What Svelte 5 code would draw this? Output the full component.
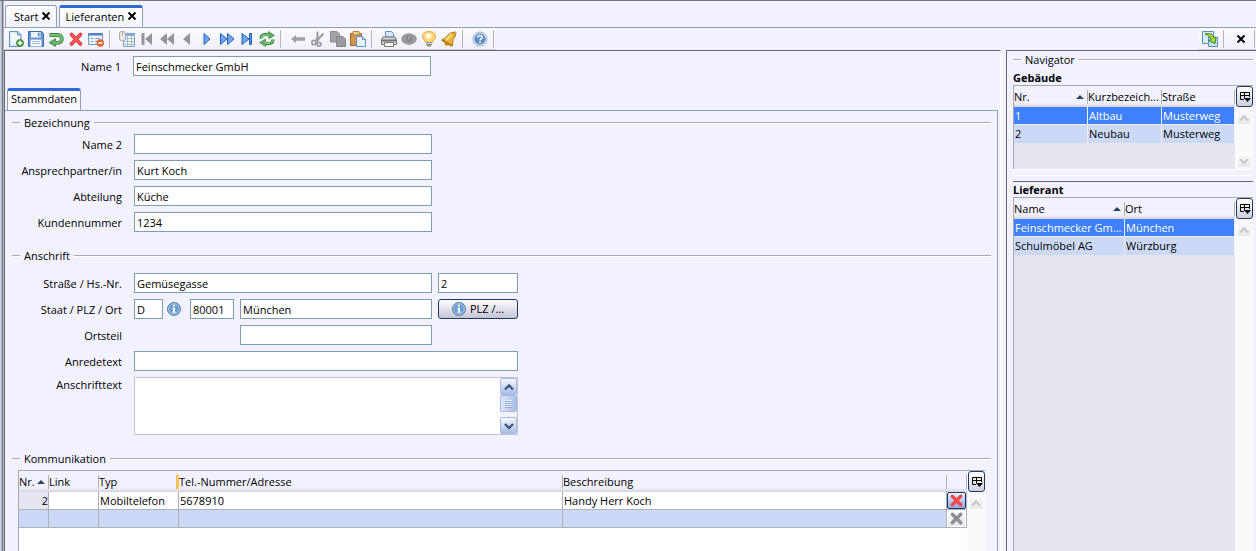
<script lang="ts">
  let tabs = [
    { title: 'Start', active: false },
    { title: 'Lieferanten', active: true },
  ];

  let toolGroups = [
    [['new', 'Neu'], ['save', 'Speichern'], ['undo', 'Rückgängig'], ['delete', 'Löschen'], ['form', 'Maske leeren']],
    [['list', 'Liste'], ['first', 'Erster'], ['rewind', 'Zurückblättern'], ['prev', 'Voriger'], ['next', 'Nächster'], ['forward', 'Vorblättern'], ['last', 'Letzter'], ['refresh', 'Aktualisieren']],
    [['back', 'Zurück'], ['cut', 'Ausschneiden'], ['copy', 'Kopieren'], ['paste', 'Einfügen']],
    [['print', 'Drucken'], ['eye', 'Vorschau'], ['bulb', 'Hinweis'], ['bell', 'Erinnerung']],
    [['help', 'Hilfe']],
  ];

  let supplier = {
    name1: 'Feinschmecker GmbH',
    name2: '',
    contact: 'Kurt Koch',
    department: 'Küche',
    customerNo: '1234',
    street: 'Gemüsegasse',
    houseNo: '2',
    country: 'D',
    zip: '80001',
    city: 'München',
    district: '',
    salutation: '',
    addressText: '',
  };

  let buildings = [
    { nr: '1', short: 'Altbau', street: 'Musterweg' },
    { nr: '2', short: 'Neubau', street: 'Musterweg' },
  ];
  let suppliers = [
    { name: 'Feinschmecker Gm...', city: 'München' },
    { name: 'Schulmöbel AG', city: 'Würzburg' },
  ];
</script>

{#snippet info()}
  <svg class="info" viewBox="0 0 14 14" aria-hidden="true">
    <circle cx="7" cy="7" r="6.5" fill="#5a8fc4" stroke="#5b7fa6" />
    <circle cx="7" cy="7" r="5.4" fill="#6a9ed0" stroke="#c3daee" stroke-width=".8" />
    <path d="M6.1 2.8h1.9v1.7H6.1zM5.2 5.7H8v4h.9v1.1H5.1V9.7H6V6.8h-.8z" fill="#fff" />
  </svg>
{/snippet}

{#snippet cross()}
  <svg class="cross" viewBox="0 0 10 10" aria-hidden="true">
    <path d="M1.500 1.500l7 7M8.500 1.500l-7 7" stroke="#000" stroke-width="1.900" fill="none" />
  </svg>
{/snippet}

{#snippet columnIcon()}
  <svg viewBox="0 0 13 13" aria-hidden="true">
    <path d="M6 9.500H2.500v-7h9V7M2.500 5.500h9M6.500 2.500v6" stroke="#000" fill="none" />
    <path d="M6 8h7l-3.500 4z" fill="#000" />
  </svg>
{/snippet}

{#snippet bigCross(color: string)}
  <svg viewBox="0 0 16 16" aria-hidden="true">
    <path d="M3.500 3.500l9 9M12.500 3.500l-9 9" stroke={color} stroke-width="3.600" stroke-linecap="round" fill="none" />
  </svg>
{/snippet}

{#snippet chevron(dir: string, color: string)}
  <svg viewBox="0 0 12 12" aria-hidden="true">
    <path d={dir === 'up' ? 'M2 8.500L6 4.500l4 4' : 'M2 4l4 4 4-4'} stroke={color} stroke-width="2.400" fill="none" />
  </svg>
{/snippet}

{#snippet sortMark()}
  <svg class="sort" viewBox="0 0 8 4" aria-hidden="true"><path d="M0 4l4-4 4 4z" fill="#2b4260" /></svg>
{/snippet}

{#snippet tool(name: string)}
  <svg viewBox="0 0 16 16" aria-hidden="true">
    {#if name === 'new'}
      <path d="M1.500.5h8.500l3 3v12H1.500z" fill="#d9ebfb" stroke="#5f93c6" />
      <path d="M3 2h6v2.500h2.500V9L3 14z" fill="#f5faff" />
      <path d="M9.500.8v3.200h3.300" fill="#a9cdf0" stroke="#5f93c6" />
      <circle cx="12" cy="12" r="3.600" fill="#58a146" stroke="#397a2c" stroke-width=".7" />
      <path d="M12 9.800v4.400M9.800 12h4.400" stroke="#fff" stroke-width="1.300" />
    {:else if name === 'save'}
      <path d="M.5.500h13l2 2v13H.5z" fill="#6696d2" stroke="#3c6cae" />
      <path d="M3 1h9.500v5.500H3z" fill="#e8f1fb" />
      <path d="M10 1.800h1.500v3.500H10z" fill="#4e7cb8" />
      <path d="M2.500 8.500h11v7h-11z" fill="#fff" stroke="#9dbce2" />
      <path d="M4 10.500h8M4 12.500h8" stroke="#9fb9d9" />
    {:else if name === 'undo'}
      <path d="M1.500 4h8.500a3.800 3.800 0 010 7.800H6.500" fill="none" stroke="#3f8b43" stroke-width="3.800" />
      <path d="M7.500 7.500v8L1 11.700z" fill="#5dab59" stroke="#3f8b43" stroke-width=".8" />
      <path d="M2 4h8a3.800 3.800 0 010 7.800H5" fill="none" stroke="#7cc077" stroke-width="2" />
    {:else if name === 'delete'}
      <path d="M3.500 3.500l9 9.500M12.500 3.500l-9 9.500" stroke="#e8343a" stroke-width="3.700" stroke-linecap="round" />
      <path d="M3.500 3.500l9 9.500M12.500 3.500l-9 9.500" stroke="#fa6463" stroke-width="1.400" stroke-linecap="round" />
    {:else if name === 'form'}
      <path d="M.5 2.500h14v11H.5z" fill="#eef4fc" stroke="#7398c8" />
      <path d="M.5 2h14v2.500H.5z" fill="#5286c6" />
      <path d="M2.500 7.500h3M2.500 10.500h3M7 7.500h5M7 10.500h3" stroke="#7aa0d0" />
      <circle cx="12.300" cy="12" r="3.400" fill="#ee6b32" stroke="#c84a18" stroke-width=".6" />
      <path d="M10.300 12h4" stroke="#fff" stroke-width="1.400" />
    {:else if name === 'list'}
      <path d="M4.500 2.500h11v13h-11z" fill="#f5faff" stroke="#7da5d0" />
      <path d="M5 3h10v2H5z" fill="#86add6" />
      <path d="M5 7.500h10M5 10.500h10M5 13.500h10M8.500 5v10" stroke="#a2bedb" />
      <path d="M12.500 5v10" stroke="#96cc7d" />
      <rect x=".5" y=".5" width="6" height="9" rx="2" fill="#e7e7e4" stroke="#a9a9a6" />
      <path d="M3.500 1v3.500" stroke="#a9a9a6" />
    {:else if name === 'first'}
      <path d="M2.500 2h3v12h-3zM13 2v12L6 8z" fill="#94949b" />
    {:else if name === 'rewind'}
      <path d="M8 2v12L1 8zM15 2v12L8 8z" fill="#94949b" />
    {:else if name === 'prev'}
      <path d="M11 2v12L4 8z" fill="#94949b" />
    {:else if name === 'next'}
      <path d="M5 2.500v11L11 8z" fill="#6da5ee" stroke="#2463bd" />
    {:else if name === 'forward'}
      <path d="M1.500 2.500v11L8 8zM8.500 2.500v11L15 8z" fill="#6da5ee" stroke="#2463bd" />
    {:else if name === 'last'}
      <path d="M3 2.500v11L10 8z" fill="#6da5ee" stroke="#2463bd" />
      <path d="M10.500 2.500h2v11h-2z" fill="#5a96e8" stroke="#2463bd" />
    {:else if name === 'refresh'}
      <path d="M2 7.500c0-4 4-5 8.500-3.500M14 8.500c0 4-4 5-8.500 3.500" fill="none" stroke="#3c8b40" stroke-width="3.200" />
      <path d="M9.500.5l6 4-5.500 3.300zM6.500 8.200v7.300L.5 11.500z" fill="#63ad61" stroke="#3c8b40" stroke-width=".7" />
      <path d="M2.200 7c.5-3 4-4 8.300-2.700M13.800 9c-.5 3-4 4-8.300 2.700" fill="none" stroke="#86c785" stroke-width="1.500" />
    {:else if name === 'back'}
      <path d="M1 8l5-4v2.300h9v3.400H6V12z" fill="#a0a0a4" />
    {:else if name === 'cut'}
      <path d="M7.500.5v6L6 10M13.500 2.500L8 8.500l-1 2" stroke="#9b9b9f" stroke-width="2" fill="none" />
      <circle cx="4" cy="11.500" r="2.200" fill="none" stroke="#9b9b9f" stroke-width="1.700" />
      <circle cx="9" cy="13.200" r="1.900" fill="none" stroke="#9b9b9f" stroke-width="1.700" />
    {:else if name === 'copy'}
      <path d="M.5.500H7L9.500 3v8H.5z" fill="#a4a4a7" stroke="#8e8e92" />
      <path d="M6.500 5.500H13L15.500 8v7.500h-9z" fill="#9b9b9f" stroke="#86868a" />
    {:else if name === 'paste'}
      <path d="M.5 2.500h11v12H.5z" fill="#d4914a" stroke="#a0652a" />
      <path d="M3 .5h6v3.500H3z" fill="#eed590" stroke="#ab8540" />
      <path d="M6.500 5.500h6l3 3v7h-9z" fill="#e4f1fe" stroke="#5d92cc" />
      <path d="M12.500 5.500v3h3" fill="#b2d1f2" stroke="#5d92cc" />
    {:else if name === 'print'}
      <path d="M4.500 6V.5h6l2 2V6z" fill="#d4e9ff" stroke="#5c95d5" />
      <path d="M2 6h12l1.500 3v4.500H.5V9z" fill="#d5d5d5" stroke="#6f7275" />
      <path d="M1 9.500h14" stroke="#6f7275" stroke-width="2" />
      <path d="M3.500 11.500h9v4h-9z" fill="#f9f9f9" stroke="#75787b" />
    {:else if name === 'eye'}
      <ellipse cx="8" cy="8" rx="7.800" ry="5.800" fill="#9a9a9e" />
      <circle cx="8" cy="7.500" r="3" fill="#858589" />
      <circle cx="8" cy="7" r="1.300" fill="#a7a7aa" />
    {:else if name === 'bulb'}
      <path d="M8 .5c4 0 6.500 2.200 6.500 5 0 2.700-2.500 3.500-3 6h-7c-.5-2.500-3-3.300-3-6 0-2.800 2.500-5 6.500-5z" fill="#fbd57a" stroke="#e8a33c" />
      <path d="M7 2c2.500 0 4 1.500 3.500 3.500S8 8 6 7.500 3.500 2.500 7 2z" fill="#fff6d4" />
      <path d="M5 11h6v2.500L9.500 15.500h-3L5 13.500z" fill="#8c8c8c" />
      <path d="M5 12.500h6" stroke="#d8d8d8" />
    {:else if name === 'bell'}
      <path d="M13.500 1.500C7 .5 7 7 1 8.500l10.500 6.500C12 11 11.500 8 14.500 5z" fill="#eab23a" stroke="#b67a16" />
      <path d="M11 4c-3 .5-3 3.500-6 5" stroke="#ffe28a" stroke-width="2" fill="none" />
      <path d="M1 9l10 6" stroke="#b3720f" stroke-width="2" />
      <circle cx="5.500" cy="13" r="1.800" fill="#c98719" />
      <path d="M12.500 1.500c1-2 3.500 0 2 2" stroke="#b67a16" fill="none" />
    {:else if name === 'help'}
      <circle cx="8" cy="8" r="7" fill="#d6e4f2" stroke="#9db8d4" />
      <circle cx="8" cy="8" r="5" fill="#5f92c8" stroke="#4f82ba" />
      <path d="M5.900 6.500c0-3 4.400-2.600 4.200-.2C10 7.600 8 7.600 8 9.300M8 10.300V12" stroke="#fff" stroke-width="1.500" fill="none" />
    {:else if name === 'sync'}
      <path d="M.5.500h11v12H.5z" fill="#d9eafa" stroke="#5d8fbd" />
      <path d="M6.500 6.500h9v9h-9z" fill="#c3dff8" stroke="#5d8fbd" />
      <path d="M3 3c5-1 8 0 8.500 3.500L14 6l-1 6.500L6.500 9.500 9 8.500C8.500 6 6.500 4.500 3 3z" fill="#a3dc35" stroke="#3d8429" />
    {/if}
  </svg>
{/snippet}

<div class="window">
  <nav class="tabs">
    {#each tabs as tab}
      <div class="tab" class:active={tab.active}>
        <a href="#{tab.title}">{tab.title}</a>
        <button class="close" aria-label="{tab.title} schließen">{@render cross()}</button>
      </div>
    {/each}
  </nav>

  <div class="toolbar">
    <div class="tools">
      {#each toolGroups as group}
        {#each group as [name, label]}
          <button class="tool" aria-label={label}>{@render tool(name)}</button>
        {/each}
        <span class="sep"></span>
      {/each}
    </div>
    <div class="tools right">
      <button class="tool" aria-label="Navigator aktualisieren">{@render tool('sync')}</button>
      <span class="sep"></span>
      <button class="tool" aria-label="Schließen">{@render cross()}</button>
      <span class="sep"></span>
    </div>
  </div>

  <div class="body">
    <main>
      <div class="row head">
        <label for="name1">Name 1</label>
        <input id="name1" class="wide" bind:value={supplier.name1} />
      </div>

      <div class="subtabs"><a class="subtab" href="#stammdaten">Stammdaten</a></div>

      <div class="panel">
        <fieldset>
          <legend>Bezeichnung</legend>
          <div class="rows">
            <div class="row">
              <label for="name2">Name 2</label>
              <input id="name2" class="wide" bind:value={supplier.name2} />
            </div>
            <div class="row">
              <label for="contact">Ansprechpartner/in</label>
              <input id="contact" class="wide" bind:value={supplier.contact} />
            </div>
            <div class="row">
              <label for="department">Abteilung</label>
              <input id="department" class="wide" bind:value={supplier.department} />
            </div>
            <div class="row">
              <label for="customerNo">Kundennummer</label>
              <input id="customerNo" class="wide" bind:value={supplier.customerNo} />
            </div>
          </div>
        </fieldset>

        <fieldset>
          <legend>Anschrift</legend>
          <div class="rows address">
            <div class="row">
              <label for="street">Straße / Hs.-Nr.</label>
              <input id="street" class="wide" bind:value={supplier.street} />
              <input class="short" aria-label="Hausnummer" bind:value={supplier.houseNo} />
            </div>
            <div class="row">
              <label for="country">Staat / PLZ / Ort</label>
              <div class="place">
                <input id="country" class="country" bind:value={supplier.country} />
                <button class="info-button" aria-label="Staat wählen">{@render info()}</button>
                <input class="zip" aria-label="PLZ" bind:value={supplier.zip} />
                <input class="city" aria-label="Ort" bind:value={supplier.city} />
              </div>
              <button class="short push">{@render info()}<span>PLZ /...</span></button>
            </div>
            <div class="row">
              <label for="district">Ortsteil</label>
              <div class="place end">
                <input id="district" class="city" bind:value={supplier.district} />
              </div>
            </div>
            <div class="row">
              <label for="salutation">Anredetext</label>
              <input id="salutation" class="full" bind:value={supplier.salutation} />
            </div>
            <div class="row top">
              <label for="addressText">Anschrifttext</label>
              <div class="memo full">
                <textarea id="addressText" bind:value={supplier.addressText}></textarea>
                <div class="memo-bar">
                  <button aria-label="Nach oben">{@render chevron('up', '#3d5885')}</button>
                  <span class="thumb"></span>
                  <button class="down" aria-label="Nach unten">{@render chevron('down', '#3d5885')}</button>
                </div>
              </div>
            </div>
          </div>
        </fieldset>

        <fieldset class="grow">
          <legend>Kommunikation</legend>
          <div class="grid-box comm">
            <div class="grid-area">
              <table>
                <colgroup>
                  <col class="c-nr" /><col class="c-link" /><col class="c-typ" /><col /><col /><col class="c-del" />
                </colgroup>
                <thead>
                  <tr>
                    <th><span class="th">Nr.{@render sortMark()}</span></th>
                    <th>Link</th>
                    <th class="marked">Typ</th>
                    <th>Tel.-Nummer/Adresse</th>
                    <th>Beschreibung</th>
                    <th></th>
                  </tr>
                </thead>
                <tbody>
                  <tr>
                    <td class="num">2</td>
                    <td></td>
                    <td>Mobiltelefon</td>
                    <td>5678910</td>
                    <td>Handy Herr Koch</td>
                    <td class="del"><button class="on" aria-label="Zeile löschen">{@render bigCross('#f4484c')}</button></td>
                  </tr>
                  <tr class="alt">
                    <td></td>
                    <td></td>
                    <td></td>
                    <td></td>
                    <td></td>
                    <td class="del"><button aria-label="Zeile löschen" disabled>{@render bigCross('#8e8e92')}</button></td>
                  </tr>
                </tbody>
              </table>
            </div>
            <div class="side">
              <button class="columns" aria-label="Spalten wählen">{@render columnIcon()}</button>
              <button class="arrow" aria-label="Nach oben">{@render chevron('up', '#c9c9cd')}</button>
            </div>
          </div>
        </fieldset>
      </div>
    </main>

    <aside>
      <h2 class="rule">Navigator</h2>
      <section class="first">
        <h3>Gebäude</h3>
        <div class="grid-box nav">
          <div class="grid-area">
            <table>
              <colgroup><col class="n-third" /><col class="n-third" /><col /></colgroup>
              <thead>
                <tr>
                  <th><span class="th">Nr.{@render sortMark()}</span></th>
                  <th>Kurzbezeich...</th>
                  <th>Straße</th>
                </tr>
              </thead>
              <tbody>
                {#each buildings as b, i}
                  <tr class:selected={i === 0}>
                    <td>{b.nr}</td>
                    <td>{b.short}</td>
                    <td>{b.street}</td>
                  </tr>
                {/each}
              </tbody>
            </table>
          </div>
          <div class="side">
            <button class="columns" aria-label="Spalten wählen">{@render columnIcon()}</button>
            <button class="arrow" aria-label="Nach oben">{@render chevron('up', '#c9c9cd')}</button>
            <button class="arrow down" aria-label="Nach unten">{@render chevron('down', '#c9c9cd')}</button>
          </div>
        </div>
      </section>
      <section class="second">
        <h3>Lieferant</h3>
        <div class="grid-box nav">
          <div class="grid-area">
            <table>
              <colgroup><col class="n-half" /><col /></colgroup>
              <thead>
                <tr>
                  <th><span class="th">Name{@render sortMark()}</span></th>
                  <th>Ort</th>
                </tr>
              </thead>
              <tbody>
                {#each suppliers as s, i}
                  <tr class:selected={i === 0}>
                    <td>{s.name}</td>
                    <td>{s.city}</td>
                  </tr>
                {/each}
              </tbody>
            </table>
          </div>
          <div class="side">
            <button class="columns" aria-label="Spalten wählen">{@render columnIcon()}</button>
            <button class="arrow" aria-label="Nach oben">{@render chevron('up', '#c9c9cd')}</button>
          </div>
        </div>
      </section>
    </aside>
  </div>
</div>

<style>
:global(body) {
  background: #f2f2ff;
  overflow: hidden;
}
.window {
  box-sizing: border-box;
  height: 100vh;
  display: flex;
  flex-direction: column;
  border-top: 1px solid #77777d;
  padding-left: 4px;
  background: linear-gradient(to right, #c0d0de 1px, #b4c0cc 1px 2px, #77777d 2px 3px, #b4b4be 3px 4px, #f2f2ff 4px);
  font-family: "Open Sans", "Noto Sans", sans-serif;
  font-size: 11px;
  line-height: 16px;
  color: #000;
}
.window :global(*) {
  box-sizing: border-box;
}
button, input, textarea {
  font: inherit;
  color: inherit;
  margin: 0;
}
button {
  padding: 0;
  border: 0;
  background: none;
  display: flex;
  align-items: center;
  justify-content: center;
}
a {
  color: inherit;
  text-decoration: none;
}
svg {
  display: block;
  flex: none;
}
.tabs {
  height: 27px;
  flex: none;
  display: flex;
  align-items: flex-end;
  gap: 2px;
  padding-left: 1px;
  border-bottom: 1px solid #8f9fb8;
}
.tab {
  height: 22px;
  display: flex;
  align-items: center;
  gap: 3px;
  padding: 0 5px 0 8px;
  border: 1px solid #8f9fb8;
  border-bottom: 0;
  border-radius: 3px 3px 0 0;
  background: linear-gradient(#fff, #f2f2ff);
}
.tab.active {
  border-top: 3px solid #3068dc;
  padding: 0 5px 2px;
}
.close {
  padding-bottom: 2px;
}
.cross {
  width: 10px;
  height: 10px;
}
.toolbar {
  height: 22px;
  flex: none;
  display: flex;
  justify-content: space-between;
}
.tools {
  display: flex;
  align-items: center;
  padding: 0 2px;
  background: linear-gradient(#fafaff, #f0f0fb);
  border-bottom: 1px solid #d0d0da;
}
.tools.right {
  padding-right: 1px;
}
.tool {
  width: 20px;
  height: 20px;
}
.tool svg {
  width: 16px;
  height: 16px;
}
.tool .cross {
  width: 10px;
  height: 10px;
}
.sep {
  width: 1px;
  height: 18px;
  margin: 0 7px 0 3px;
  background: #b4b4bc;
}
.tools .sep:last-child {
  margin-right: 0;
}
.body {
  flex: 1;
  min-height: 0;
  display: flex;
  gap: 5px;
}
main {
  flex: 1;
  min-width: 0;
  display: flex;
  flex-direction: column;
  border-top: 1px solid #66666c;
  border-left: 1px solid #66666c;
  border-right: 1px solid #fff;
  padding-right: 2px;
}
.row {
  display: flex;
  gap: 6px;
}
.row label {
  flex: none;
  width: 110px;
  padding: 3px 0 0;
  margin-right: 6px;
  text-align: right;
  white-space: nowrap;
}
.row.top label {
  padding: 0;
}
.head {
  padding: 5px 0 12px;
}
.row.head label {
  width: 116px;
}
.rows {
  display: flex;
  flex-direction: column;
  gap: 6px;
  padding: 3px 0 16px;
}
.rows.address {
  padding-top: 9px;
}
input, textarea {
  height: 20px;
  padding: 0 2px;
  border: 1px solid #7f9db9;
  border-radius: 0;
  background: #fff;
  outline: none;
}
.wide {
  width: 298px;
}
.short {
  width: 80px;
}
.full {
  width: 384px;
}
.place {
  width: 298px;
  display: flex;
}
.place.end {
  justify-content: flex-end;
}
.country {
  width: 29px;
}
.zip {
  width: 44px;
  margin: 0 6px 0 5px;
}
.city {
  width: 192px;
}
.info {
  width: 14px;
  height: 14px;
}
.info-button {
  width: 22px;
  height: 20px;
}
.push {
  height: 20px;
  gap: 4px;
  border: 1px solid #1c3a66;
  border-radius: 3px;
  background: linear-gradient(#fdfdff, #dcdce8 60%, #c4c4d4);
}
.memo {
  height: 58px;
  display: flex;
  border: 1px solid #c4c4d0;
  background: #fff;
}
.memo textarea {
  flex: 1;
  height: 56px;
  border: 0;
  resize: none;
}
.memo-bar {
  width: 17px;
  display: flex;
  flex-direction: column;
  background: #f2f2fb;
}
.memo-bar button, .thumb {
  height: 17px;
  border: 1px solid #a7bbe6;
  border-radius: 2px;
  background: linear-gradient(#f6f9ff, #a9bce6);
}
.memo-bar button svg, .arrow svg {
  width: 12px;
  height: 12px;
}
.memo-bar .thumb {
  background:
    repeating-linear-gradient(#eef3ff 0 1px, #8fa6d8 1px 2px) center / 7px 8px no-repeat,
    linear-gradient(to right, #dfe8fc, #a9bce6);
}
.down {
  margin-top: auto;
}
.subtabs {
  display: flex;
  padding-left: 2px;
}
.subtab {
  height: 22px;
  padding: 0 3px;
  border: 1px solid #8f9fb8;
  border-top: 3px solid #3068dc;
  border-bottom: 0;
  border-radius: 3px 3px 0 0;
  background: linear-gradient(#fff, #f6f6ff);
}
.panel {
  flex: 1;
  min-height: 0;
  display: flex;
  flex-direction: column;
  padding: 4px 6px 0 7px;
  border-top: 1px solid #8f9fb8;
  border-right: 1px solid #8f9fb8;
}
fieldset {
  min-width: 0;
  margin: 0;
  padding: 0;
  border: 0;
}
legend, .rule {
  width: 100%;
  height: 16px;
  margin: 0;
  padding: 0;
  display: flex;
  align-items: center;
  gap: 4px;
  font-size: 11px;
  font-weight: 400;
}
legend::before, legend::after, .rule::before, .rule::after {
  content: "";
  height: 2px;
  background: linear-gradient(#aaaab4 50%, #fff 50%);
}
legend::before, .rule::before {
  width: 8px;
}
legend::after, .rule::after {
  flex: 1;
}
.grow {
  flex: 1;
  min-height: 0;
  display: flex;
  flex-direction: column;
}
.grid-box {
  display: flex;
  border-top: 1px solid #a8a8b0;
}
.comm {
  flex: 1;
  min-height: 0;
  margin: 3px 6px 0;
}
.grid-area {
  flex: 1;
  min-width: 0;
  border-left: 1px solid #a8a8b0;
  background: #fff;
}
.nav .grid-area {
  background: #e6e6f0;
}
table {
  width: 100%;
  table-layout: fixed;
  border-collapse: separate;
  border-spacing: 0;
}
.c-nr {
  width: 30px;
}
.c-link {
  width: 50px;
}
.c-typ {
  width: 80px;
}
.c-del {
  width: 20px;
}
.n-third {
  width: 74px;
}
.n-half {
  width: 111px;
}
th, td {
  text-align: left;
  font-weight: 400;
  white-space: nowrap;
  overflow: hidden;
  text-overflow: ellipsis;
}
th {
  height: 21px;
  padding: 0;
  background:
    linear-gradient(#b0b0b8, #b0b0b8) right 4px / 1px 14px no-repeat,
    linear-gradient(#f2f2ff 17px, #d2d2dc);
}
th.marked {
  background:
    linear-gradient(#ffc35c, #ffc35c) right 4px / 3px 14px no-repeat,
    linear-gradient(#f2f2ff 17px, #d2d2dc);
}
.th {
  display: flex;
  align-items: center;
  justify-content: space-between;
  padding-right: 4px;
}
.sort {
  width: 8px;
  height: 4px;
}
td {
  height: 18px;
  padding: 0 0 0 1px;
}
.comm td {
  border-right: 1px solid #b0b0b8;
  border-bottom: 1px solid #b0b0b8;
}
.comm td.num {
  background: #e6e6f0;
  text-align: right;
}
.alt td {
  background: #cbd9f6;
}
.comm td.del {
  padding: 0;
  background: #f2f2ff;
}
.del button {
  width: 19px;
  height: 17px;
  border: 1px solid #fff;
  background: linear-gradient(#fcfcff, #e6e6ee);
}
.del button.on {
  border-color: #1c3a66;
  border-radius: 2px;
  background: linear-gradient(#e8f0ff, #8fa9de);
}
.del svg {
  width: 15px;
  height: 15px;
}
.nav td {
  background: #cbd9f6;
  border-right: 1px solid #eeeefa;
}
.nav .selected td {
  background: #3f80ff;
  color: #fff;
  border-bottom: 1px solid #eeeefa;
}
.side {
  width: 18px;
  flex: none;
  display: flex;
  flex-direction: column;
  align-items: center;
  background: #fafafd;
}
.columns {
  width: 17px;
  height: 21px;
  border: 1px solid #1c3a66;
  border-radius: 3px;
  background: linear-gradient(#fff, #cfcfdc);
}
.columns svg {
  width: 13px;
  height: 13px;
}
.arrow {
  width: 13px;
  height: 13px;
  margin-top: 4px;
  background: linear-gradient(#fafafa, #e9e9ee);
}
.arrow.down {
  margin: auto 0 2px;
}
aside {
  width: 250px;
  flex: none;
  display: flex;
  flex-direction: column;
  padding: 1px 3px 0 6px;
  border-top: 1px solid #66666c;
  border-left: 1px solid #66666c;
}
h3 {
  margin: 0;
  height: 15px;
  line-height: 15px;
  font-size: 11px;
  font-weight: 700;
}
.first {
  padding: 2px 0 5px;
  border-bottom: 1px solid #fff;
}
.first .nav {
  height: 85px;
  border-bottom: 1px solid #fff;
}
.second {
  flex: 1;
  min-height: 0;
  display: flex;
  flex-direction: column;
  margin-top: 5px;
  border-top: 1px solid #66666c;
}
.second .nav {
  flex: 1;
}
</style>
